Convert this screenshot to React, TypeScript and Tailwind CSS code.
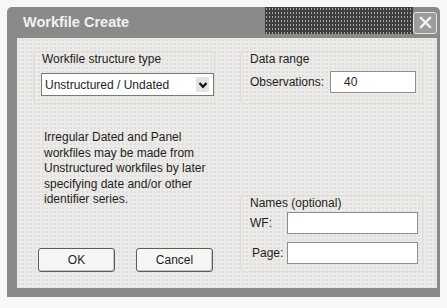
const font = "font-['Liberation_Sans','Arial',sans-serif]";

// faint XP-style group box
const GroupBox = ({ className, children }: { className: string; children: React.ReactNode }) => (
  <div className={`rounded-[3px] border border-[#dcdcd8] ${className}`}>{children}</div>
);

const TextBox = ({ value, className }: { value?: string; className: string }) => (
  <div
    className={`flex items-center border border-[#8e8e8e] bg-white pl-[13px] text-[12px] text-[#1e1e1e] ${className}`}
  >
    {value}
  </div>
);

const Button = ({ label }: { label: string }) => (
  <button
    type="button"
    className="flex h-[24px] w-[77px] items-center justify-center rounded-[3px] border border-[#5c5c5c] bg-[#f6f6f4] text-[12px] text-[#1e1e1e] shadow-[inset_-1px_-1px_0_#c4c4c4]"
  >
    {label}
  </button>
);

export default function App() {
  return (
    <div className={`h-[308px] w-[447px] bg-[#f7f7f7] pl-[7px] pt-[7px] ${font}`}>
      <div className="flex h-[290px] w-[433px] flex-col rounded-t-[5px] bg-[#8a8a8a]">
        {/* 제목 표시줄 */}
        <div className="flex h-[31px] items-center pr-[3px]">
          <p className="pl-[16px] text-[14.5px] font-bold text-[#f2f2f2]">Workfile Create</p>
          <div className="flex-1" />
          <div className="h-[27px] w-[148px] self-start bg-[#3e3e3e] bg-[radial-gradient(circle,#a8a8a8_0.7px,transparent_1px)] bg-size-[3px_4px]" />
          <div className="flex h-[22px] w-[24px] items-center justify-center rounded-[3px] border border-[#e6e6e6] bg-[#9c9c9c]">
            <svg width="13" height="13" viewBox="0 0 13 13">
              <path d="M2 2 L11 11 M11 2 L2 11" stroke="#f4f4f4" strokeWidth="2.4" strokeLinecap="square" />
            </svg>
          </div>
        </div>

        {/* 본문 */}
        <div className="mb-[9px] ml-[10px] mr-[3px] flex flex-1 gap-[25px] bg-[#ecebe8] bg-[radial-gradient(circle,#dedddb_0.9px,transparent_1px)] bg-size-[4px_4px] pb-[16px] pl-[16px] pt-[13px] text-[12px] text-[#1e1e1e]">
          {/* 왼쪽 */}
          <div className="flex w-[182px] flex-col">
            <GroupBox className="h-[53px] pl-[7px]">
              <p className="pl-[1px] leading-[14px]">Workfile structure type</p>
              <div className="mt-[7px] flex h-[23px] w-[173px] items-center border border-[#7a7a7a] bg-white pl-[3px]">
                <span className="flex-1">Unstructured / Undated</span>
                <span className="mr-[4px] flex h-[15px] w-[13px] items-center justify-center bg-[#e4e4e4]">
                  <svg width="10" height="8" viewBox="0 0 10 8">
                    <path d="M1.5 2 L5 5.8 L8.5 2" fill="none" stroke="#111" strokeWidth="2.2" />
                  </svg>
                </span>
              </div>
            </GroupBox>
            <p className="ml-[11px] mt-[26px] leading-[15.5px]">
              Irregular Dated and Panel
              <br />
              workfiles may be made from
              <br />
              Unstructured workfiles by later
              <br />
              specifying date and/or other
              <br />
              identifier series.
            </p>
            <div className="mt-auto flex gap-[21px] pl-[5px]">
              <Button label="OK" />
              <Button label="Cancel" />
            </div>
          </div>

          {/* 오른쪽 */}
          <div className="flex w-[183px] flex-col">
            <GroupBox className="h-[53px] pl-[9px]">
              <p className="leading-[14px]">Data range</p>
              <div className="mt-[5px] flex items-center">
                <span className="w-[80px]">Observations:</span>
                <TextBox value="40" className="h-[22px] w-[86px]" />
              </div>
            </GroupBox>
            <GroupBox className="mt-[91px] h-[77px] pl-[9px]">
              <p className="leading-[14px]">Names (optional)</p>
              <div className="mt-[2px] flex items-center">
                <span className="w-[37px]">WF:</span>
                <TextBox className="h-[22px] w-[131px]" />
              </div>
              <div className="mt-[8px] flex items-center">
                <span className="w-[37px] pl-[2px]">Page:</span>
                <TextBox className="h-[22px] w-[131px]" />
              </div>
            </GroupBox>
          </div>
        </div>
      </div>
    </div>
  );
}
